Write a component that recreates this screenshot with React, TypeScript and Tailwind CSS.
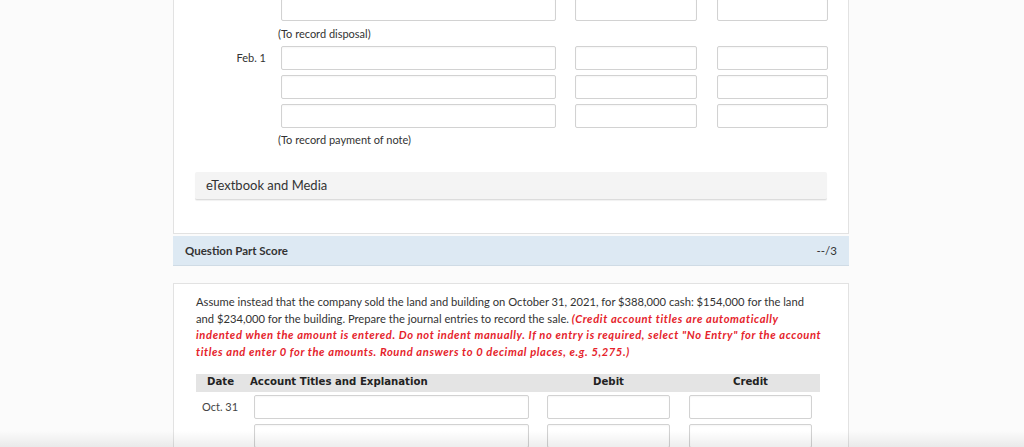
import React from 'react';

const Field = ({ w }: { w: string }) => (
    <div className={`h-[24px] ${w} shrink-0 rounded-[2px] border border-[#d2d2d2] bg-white shadow-[inset_0_1px_2px_rgba(0,0,0,0.04)]`} />
);

function EntryRow({ label }: { label?: string }) {
    return (
        <div className="flex items-center">
            <div className="w-[93px] shrink-0 pr-[15px] text-right text-[11px] text-[#333]">{label}</div>
            <Field w="w-[275px]" />
            <div className="w-[19px] shrink-0" />
            <Field w="w-[122px]" />
            <div className="w-[20px] shrink-0" />
            <Field w="w-[111px]" />
        </div>
    );
}

function SaleRow({ label }: { label?: string }) {
    return (
        <div className="flex items-center">
            <div className="w-[58px] shrink-0 pl-[6px] text-[11px] text-[#444]">{label}</div>
            <Field w="w-[275px]" />
            <div className="w-[18px] shrink-0" />
            <Field w="w-[123px]" />
            <div className="w-[19px] shrink-0" />
            <Field w="w-[123px]" />
        </div>
    );
}

export default function App() {
    return (
        <div className="relative h-[447px] overflow-hidden bg-[#fbfbfb] font-[Lato,'Noto_Sans',sans-serif] text-[#333]">
            <div className="ml-[173px] w-[676px]">
                {/* Previous entries */}
                <div className="border-x border-b border-[#e2e2e2] bg-white pb-[33px] pl-[14px] pr-[21px]">
                    <div className="-mt-[3px] flex flex-col">
                        <EntryRow />
                        <p className="mt-[6px] pl-[90px] text-[11px] leading-[14px]">(To record disposal)</p>
                        <div className="mt-[5px] flex flex-col gap-[5px]">
                            <EntryRow label="Feb. 1" />
                            <EntryRow />
                            <EntryRow />
                        </div>
                        <p className="mt-[5px] pl-[90px] text-[11px] leading-[14px]">(To record payment of note)</p>
                    </div>
                    <div className="mt-[25px] ml-[7px] flex h-[28px] items-center rounded-[2px] border-b border-[#dcdcdc] bg-[#f4f4f4] px-[11px] text-[13px] text-[#333] shadow-[0_1px_1px_rgba(0,0,0,0.06)]">
                        eTextbook and Media
                    </div>
                </div>

                {/* Score bar */}
                <div className="mt-[2px] flex h-[30px] items-center justify-between border-b border-[#cfdbe5] bg-[#dde9f3] px-[12px] text-[11.5px] text-[#333]">
                    <span className="font-bold">Question Part Score</span>
                    <span>--/3</span>
                </div>

                {/* Alternate scenario */}
                <div className="mt-[17px] border-x border-t border-[#e2e2e2] bg-white pl-[22px] pr-[22px] pt-[10px]">
                    <p className="mr-[3px] text-[11.2px] leading-[16.7px] text-[#333]">
                        Assume instead that the company sold the land and building on October 31, 2021, for $388,000 cash: $154,000 for the land and $234,000 for the building. Prepare the journal entries to record the sale.{' '}
                        <span className="font-bold italic tracking-[0.6px] text-[#e5232b]">
                            (Credit account titles are automatically indented when the amount is entered. Do not indent manually. If no entry is required, select "No Entry" for the account titles and enter 0 for the amounts. Round answers to 0 decimal places, e.g. 5,275.)
                        </span>
                    </p>

                    <div className="mr-[6px] mt-[13px] flex h-[18px] items-center bg-[#e4e4e4] font-['DejaVu_Sans_Condensed','DejaVu_Sans',sans-serif] text-[11.3px] font-bold text-[#222]">
                        <div className="w-[54px] shrink-0 pl-[11px]">Date</div>
                        <div className="w-[297px] shrink-0">Account Titles and Explanation</div>
                        <div className="w-[123px] shrink-0 text-center">Debit</div>
                        <div className="w-[19px] shrink-0" />
                        <div className="w-[123px] shrink-0 text-center">Credit</div>
                    </div>
                    <div className="mt-[3px] flex flex-col gap-[5px]">
                        <SaleRow label="Oct. 31" />
                        <SaleRow />
                    </div>
                </div>
            </div>

            {/* bottom fade */}
            <div className="pointer-events-none absolute inset-x-0 bottom-0 h-[16px] bg-gradient-to-b from-transparent to-black/[0.07]" />
        </div>
    );
}
